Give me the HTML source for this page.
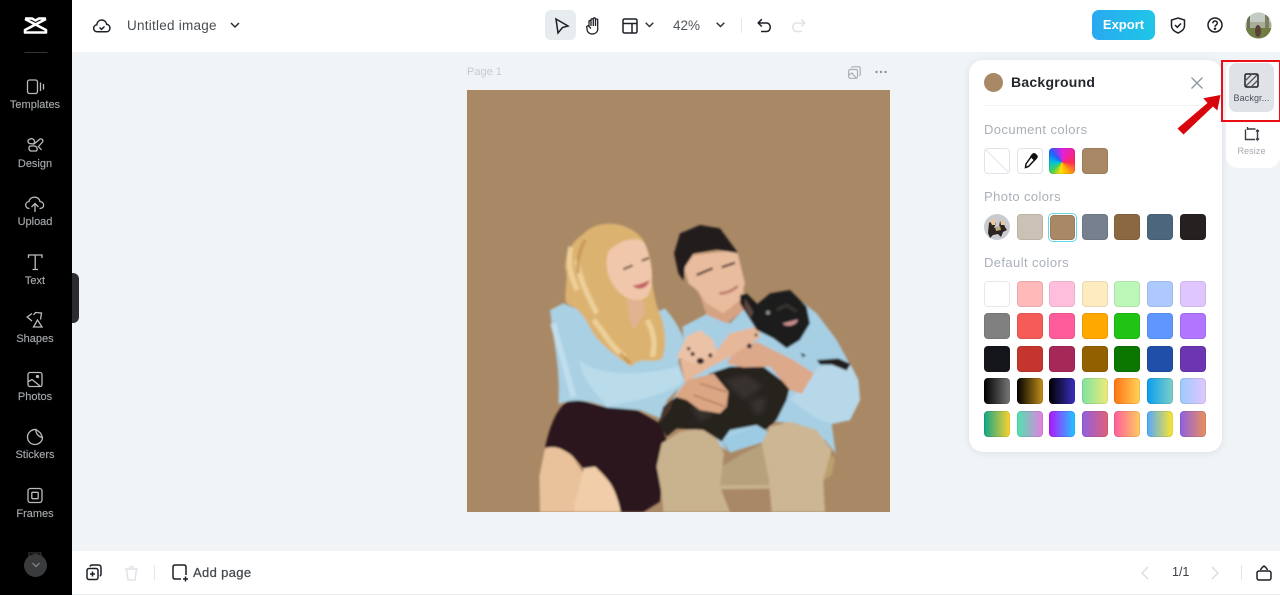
<!DOCTYPE html>
<html><head><meta charset="utf-8"><style>
html,body{margin:0;padding:0;width:1280px;height:595px;overflow:hidden;background:#f1f4f7;font-family:"Liberation Sans",sans-serif}
.a{position:absolute}
.t{position:absolute;white-space:nowrap;filter:blur(.3px)}
.nl{position:absolute;left:0;width:70px;text-align:center;color:#a4a8ab;font-size:11px;line-height:13px;filter:blur(.3px);-webkit-text-stroke:.15px #a4a8ab}
.s{position:absolute;width:26px;height:26px;border-radius:4px;box-sizing:border-box;box-shadow:inset 0 0 0 1px rgba(0,0,0,.08)}
.p{position:absolute;left:984px;font-size:13px;line-height:16px;color:#a9b0b9;letter-spacing:.4px;white-space:nowrap;filter:blur(.3px)}
svg{position:absolute;overflow:visible}
</style></head><body>
<div class="a" style="left:0;top:0;width:1280px;height:52px;background:#fff"></div>
<div class="a" style="left:72px;top:551px;width:1208px;height:43px;background:#fff"></div>
<div class="a" style="left:72px;top:594px;width:1208px;height:1px;background:#e8ebee"></div>

<!-- left bar -->
<div class="a" style="left:0;top:0;width:72px;height:595px;background:#000"></div>
<div class="a" style="left:72px;top:273px;width:7px;height:50px;background:#2b2c2e;border-radius:0 6px 6px 0"></div>
<svg style="left:0;top:0" width="72" height="595" fill="none" stroke="#b9bcbf" stroke-width="1.300">
<path d="M25 18.500H32L35.500 20.500 39 18.500H46M25 19L46 30V32.500H25V30L46 19" stroke="#fff" stroke-width="2.600" stroke-linejoin="round"/>
<path d="M24.500 52.500h23" stroke="#333" stroke-width="1"/>
<rect x="27.500" y="80" width="10" height="13.500" rx="2"/><path d="M40.500 82.500v8.500M43.500 84v5.500"/>
<path d="M29 139.500c3-2 6 0 5.500 3l-1 1.500-4-.5c-2-1-2-3 -.5-4zM34 144l6-5c2-.500 3.500 1 2.500 3l-4.500 5M30 146h5c2 1 3 3 1.500 5h-6c-2-1-2-4-.5-5zM38 146l3.500 4"/>
<path d="M29.500 208.500c-5 0-5-6.500-.5-7 .5-5.500 10-6 11 0 5 .5 5 7-.5 7M35 212v-8M31.500 207l3.500-3.500 3.500 3.500"/>
<path d="M28.500 258v-3h13.500v3M35.200 255v14.500M32.500 269.500h5.500"/>
<path d="M32 313.500l-4.800 3.500 4.800 4M33.500 315l2-2.500 6 .5-1 6.500M33.500 327l4-7 4.500 7z"/>
<rect x="28" y="372.500" width="14" height="14" rx="2"/><path d="M28.500 381.500l3.500-2 8 6.500"/><circle cx="37.500" cy="376.500" r="1" fill="#b9bcbf"/>
<path d="M36 429.500c-4-.5-8.500 3-8.500 7.500 0 4.500 3.500 7.500 7.500 7.500 3.500 0 7.500-3 7.500-7l-2-4.500zM36 429.500c-.5 3 1.500 7 6.500 8"/>
<rect x="28" y="488.500" width="14" height="14" rx="2.500"/><rect x="31.800" y="492.300" width="6.400" height="6.400" rx="1"/>
<path d="M29 563v-10h12v10M35 553v10" stroke="#333"/>
</svg>
<div class="a" style="left:24px;top:554px;width:23px;height:23px;border-radius:50%;background:#3a3b3d"></div>
<svg style="left:32px;top:562px" width="8" height="6" fill="none" stroke="#8a8c8e" stroke-width="1.200"><path d="M.5 1l3.500 3.500L7.500 1"/></svg>
<div class="nl" style="top:99px">Templates</div>
<div class="nl" style="top:158px">Design</div>
<div class="nl" style="top:216px">Upload</div>
<div class="nl" style="top:275px">Text</div>
<div class="nl" style="top:333px">Shapes</div>
<div class="nl" style="top:391px">Photos</div>
<div class="nl" style="top:449px">Stickers</div>
<div class="nl" style="top:508px">Frames</div>

<!-- top bar -->
<svg style="left:93px;top:17px" width="18" height="17" fill="none" stroke="#1c2026" stroke-width="1.500"><path d="M4.500 14.800c-5 0-5-6.300-.8-7C4.500 1.500 12.500 1.500 13.700 7.300c4.500.8 4.300 7.500-.5 7.500zM6.500 10.500l2 1.800 3-2.800"/></svg>
<div class="t" style="left:127px;top:18px;font-size:13.500px;line-height:15px;color:#484d54;letter-spacing:.25px">Untitled image</div>
<svg style="left:230px;top:22px" width="10" height="7" fill="none" stroke="#2a2e33" stroke-width="1.500"><path d="M1 1l4 4 4-4"/></svg>

<div class="a" style="left:545px;top:10px;width:31px;height:30px;background:#e7ecef;border-radius:6px"></div>
<svg style="left:555px;top:18px" width="14" height="16" fill="none" stroke="#1c2026" stroke-width="1.500"><path d="M1 1l12 7-5.500 1.500L3 15z"/></svg>
<svg style="left:586px;top:17px" width="17" height="18" fill="none" stroke="#1c2026" stroke-width="1.300"><path d="M3 9.500V4.500c0-1.300 2-1.300 2 0V2.800c0-1.400 2.200-1.400 2.200 0V2c0-1.400 2.300-1.400 2.300 0v1c0-1.300 2.200-1.300 2.200 0v9c0 6-8.500 6.500-10.300 2L.8 10.500c-.5-1.500 1.500-2.300 2.200-1L5 11.500M5 4.500V9M7.300 2.500V9M9.500 2.500V9"/></svg>
<svg style="left:622px;top:18px" width="16" height="16" fill="none" stroke="#1c2026" stroke-width="1.500"><rect x="1" y="1" width="14" height="14" rx="1.500"/><path d="M1 5.500h14M10 5.500V15"/></svg>
<svg style="left:645px;top:22px" width="9" height="6" fill="none" stroke="#2a2e33" stroke-width="1.400"><path d="M.7.700l3.800 3.800L8.300.7"/></svg>
<div class="t" style="left:673px;top:18px;font-size:13.500px;line-height:16px;color:#50555c">42%</div>
<svg style="left:716px;top:22px" width="9" height="6" fill="none" stroke="#2a2e33" stroke-width="1.400"><path d="M.7.700l3.800 3.800L8.300.7"/></svg>
<div class="a" style="left:741px;top:18px;width:1px;height:15px;background:#e3e7ea"></div>
<svg style="left:757px;top:18px" width="15" height="15" fill="none" stroke="#1c2026" stroke-width="1.500"><path d="M1.500 5h8c5 0 5 8.500 0 8.500H4M4.800 1.200L1.200 5l3.600 3.500"/></svg>
<svg style="left:791px;top:18px" width="15" height="15" fill="none" stroke="#dde3e7" stroke-width="1.500"><path d="M13.500 5h-8c-5 0-5 8.500 0 8.500H11M10.200 1.200L13.800 5l-3.600 3.500"/></svg>

<div class="a" style="left:1092px;top:10px;width:63px;height:30px;border-radius:7px;background:linear-gradient(90deg,#29a9f0,#1fc6e8)"></div>
<div class="t" style="left:1092px;top:17px;width:63px;text-align:center;font-size:13px;line-height:16px;font-weight:bold;color:#fff">Export</div>
<svg style="left:1170px;top:17px" width="16" height="17" fill="none" stroke="#1c2026" stroke-width="1.500"><path d="M8 1l6.500 2v6c0 3.500-3 5.500-6.500 7-3.500-1.500-6.500-3.500-6.500-7V3zM5 8l2.300 2.300L11 6.500"/></svg>
<svg style="left:1207px;top:17px" width="16" height="16" fill="none" stroke="#1c2026" stroke-width="1.500"><circle cx="8" cy="8" r="7"/><path d="M5.800 6.200c0-3 4.600-2.800 4.500 0 0 1.800-2.300 1.800-2.300 3.500"/><circle cx="8" cy="11.800" r=".5" fill="#1c2026"/></svg>
<svg style="left:1245px;top:12px" width="27" height="27"><defs><clipPath id="av"><circle cx="13.500" cy="13.500" r="13"/></clipPath></defs><g clip-path="url(#av)"><rect width="27" height="27" fill="#a8ad98"/><rect width="27" height="10" fill="#c3ccc4"/><rect y="16" width="27" height="11" fill="#6f7d44"/><rect x="2" y="4" width="3" height="12" fill="#6d7256"/><rect x="20" y="3" width="4" height="13" fill="#7b8062"/><ellipse cx="13" cy="19" rx="3" ry="6" fill="#5a4036"/></g></svg>

<!-- canvas -->
<div class="t" style="left:467px;top:66px;font-size:11px;line-height:13px;color:#c5cad0">Page 1</div>
<svg style="left:848px;top:66px" width="13" height="13" fill="none" stroke="#a9aeb4" stroke-width="1.200"><rect x=".7" y="3.500" width="8.800" height="8.800" rx="1.500"/><path d="M3.500 1.800c0-.7.500-1 1-1h6.500c.7 0 1.200.5 1.200 1.200v6.500c0 .6-.4 1-1 1M1 9l3-2 4 5"/></svg>
<svg style="left:875px;top:70px" width="12" height="4" fill="#8e9399"><circle cx="1.500" cy="2" r="1.200"/><circle cx="6" cy="2" r="1.200"/><circle cx="10.500" cy="2" r="1.200"/></svg>

<div class="a" style="left:467px;top:90px;width:423px;height:422px;background:#a98865"></div>
<svg style="left:530px;top:210px" width="340" height="302" viewBox="0 0 1020 906"><defs><filter id="b" x="-5%" y="-5%" width="110%" height="110%"><feGaussianBlur stdDeviation="3.500"/></filter><filter id="b2" x="-20%" y="-20%" width="140%" height="140%"><feGaussianBlur stdDeviation="8"/></filter><clipPath id="c"><rect width="1020" height="906"/></clipPath></defs>
<g clip-path="url(#c)"><g filter="url(#b)">
<!-- woman's legs -->
<path d="M45 715L28 800 30 906H135L160 790 125 735 75 708z" fill="#e9c29b"/>
<path d="M162 772L135 880 135 906H274L250 830 195 770z" fill="#f1cdaa"/>
<!-- skirt -->
<path d="M45 715C58 650 85 575 130 568 170 572 200 590 230 590L320 600 390 640 410 690 395 830 390 875 340 906H272C265 860 240 800 195 770L160 775C130 735 90 700 45 715z" fill="#2c151c"/>
<!-- woman's shirt -->
<path d="M60 300L100 280 150 300 300 340 405 295C435 330 460 370 462 400L445 455 465 515 412 570 390 625 330 600 230 592C180 570 130 565 85 582 92 480 70 390 60 300z" fill="#a9d0e3"/>
<path d="M150 450C190 490 300 505 445 470L462 515C400 560 300 575 230 590 190 540 150 500 150 450z" fill="#b9dbea"/>
<path d="M70 340C90 420 110 480 130 560" stroke="#c0deec" stroke-width="18" fill="none"/>
<!-- man's shirt -->
<path d="M458 350L530 312 600 340 640 300 815 275 860 310 920 390 985 510 990 570 960 630 905 642 917 730 885 690 800 640 730 635 700 660 625 680 575 690 592 725 480 640 400 620 465 500z" fill="#a6cfe4"/>
<path d="M575 690L700 640 720 690 600 728z" fill="#9ecbe4"/>
<!-- man's pants -->
<path d="M570 830L575 770 640 730 700 700 718 830z" fill="#b7a17c"/>
<path d="M380 770L395 700 450 665 520 655 560 685 582 730 570 830 600 906H400L395 850z" fill="#c9b28e"/>
<path d="M875 715L915 745 905 795 878 815z" fill="#b9a06c"/>
<path d="M695 700L720 650 780 635 860 660 905 720 880 810 885 906H725L715 800z" fill="#ccb693"/>
<path d="M570 826L718 826 718 836 570 838z" fill="#c7b48f"/>
<!-- dog body -->
<path d="M385 640L400 590 440 560 540 490 600 470 700 470 780 530 770 570 740 630 705 660 680 645 600 660 575 695 520 660 440 655 410 680z" fill="#26211f"/>
<path d="M580 510l70-15 50 35-60 40zM480 590l40-15 30 40-40 20zM660 570l50-10-10 50-30 0z" fill="#39332f" filter="url(#b2)"/>
<path d="M388 640L402 592 430 570 420 600z" fill="#4c342a"/>
<!-- man's sleeve -->
<path d="M780 570L850 490 865 470 960 460 985 510 990 570 960 630 905 642 860 625z" fill="#b7d8e9"/>
<!-- black patch -->
<path d="M860 450L925 445 962 462 950 482 905 464 870 464z" fill="#211e1d"/>
<path d="M812 428l16 8-10 6z" fill="#211e1d"/>
<!-- man's arm and hand -->
<path d="M590 460L610 430 680 395 720 415 790 450 852 490 815 552 780 540 720 470 640 472z" fill="#dca98a"/>
<!-- woman's lower hand -->
<path d="M435 560L470 510 550 490 595 545 590 590 570 610 510 600 470 570z" fill="#dba683"/>
<path d="M510 520l80 26M490 555l95 35" stroke="#a9765a" stroke-width="4" fill="none"/>
<!-- woman's upper arm/hand -->
<path d="M450 450L560 420 600 370 680 350 692 380 665 400 600 440 540 472 465 516z" fill="#e6b798"/>
<path d="M440 442L470 380 510 360 550 390 560 432 500 462z" fill="#ebc2a6"/>
<g fill="#2a1a20"><ellipse cx="511" cy="453" rx="11" ry="9"/><circle cx="541" cy="436" r="6"/><circle cx="658" cy="408" r="7"/><circle cx="476" cy="416" r="5"/><circle cx="488" cy="432" r="6"/><circle cx="678" cy="375" r="4"/></g>
<!-- man's neck -->
<path d="M505 245L640 235 655 290 590 340 530 315z" fill="#d6a284"/>
<!-- man's head -->
<path d="M462 175L490 135 570 125 622 125 645 220 630 270 580 310 530 280 500 240 475 220z" fill="#e9bc9e"/>
<path d="M432 130L450 70 510 45 570 55 625 130 560 118 490 130 465 170 460 212 445 190z" fill="#211a1b"/>
<path d="M500 195l48-20M575 172l40-14" stroke="#4d3a34" stroke-width="7" fill="none"/>
<path d="M568 250c20 0 40-8 55-22" stroke="#b97a68" stroke-width="8" fill="none"/>
<!-- woman's hair -->
<path d="M160 72C195 30 290 25 340 90 365 190 370 260 385 300 410 350 410 420 395 448 355 460 325 440 305 470 270 450 235 420 205 390 170 350 170 310 120 285 90 280 120 215 105 170 110 120 130 92 160 72z" fill="#dcb26f"/>
<path d="M140 150c10 60 30 100 60 160M190 330c30 30 50 80 95 110M352 330c20 40 25 70 15 110M122 110c-10 50 0 90 20 130" stroke="#f0d6a2" stroke-width="16" fill="none" opacity=".8"/>
<path d="M165 90c-15 30-25 60-20 100M270 430l30 30" stroke="#c28f4c" stroke-width="10" fill="none" opacity=".7"/>
<!-- woman's face and neck -->
<path d="M290 270L340 265 345 310 310 360 300 330z" fill="#e3b291"/>
<path d="M235 125C260 95 320 72 345 100 372 165 372 230 352 260 320 280 280 270 250 225 228 195 225 155 235 125z" fill="#f0c7aa"/>
<path d="M280 178l28-12M335 152l22-8" stroke="#5e4338" stroke-width="6" fill="none"/>
<path d="M308 226c15 0 35-8 50-16-2 25-35 35-50 16z" fill="#c45f63"/>
<!-- dog head -->
<path d="M630 255L650 250 682 282 720 250 780 240 830 290 840 340 810 390 770 415 730 385 680 360 655 320 630 280z" fill="#1d1a1b"/>
<path d="M645 265l25 40-8 20-18-35z" fill="#5f443c"/>
<path d="M758 340l45-12c2 15-32 28-45 12z" fill="#c88e8e"/>
<circle cx="714" cy="308" r="6" fill="#8f8c8b"/>
<path d="M740 300l30-15 30 20" stroke="#35312f" stroke-width="10" fill="none"/>
</g></g></svg>

<!-- panel -->
<div class="a" style="left:969px;top:60px;width:253px;height:392px;background:#fff;border-radius:14px;box-shadow:0 1px 8px rgba(30,50,70,.1)"></div>
<div class="a" style="left:984px;top:73px;width:19px;height:19px;border-radius:50%;background:#a98865"></div>
<div class="t" style="left:1011px;top:74px;font-size:14px;line-height:17px;font-weight:bold;color:#24282e;letter-spacing:.25px">Background</div>
<svg style="left:1191px;top:77px" width="12" height="12" fill="none" stroke="#8e959c" stroke-width="1.300"><path d="M.5.500l11 11M11.500.500l-11 11"/></svg>
<div class="a" style="left:984px;top:105px;width:223px;height:1px;background:#f1f3f5"></div>
<div class="p" style="top:122px">Document colors</div>
<div class="p" style="top:189px">Photo colors</div>
<div class="p" style="top:255px">Default colors</div>

<div class="s" style="left:984px;top:148px;background:#fff;box-shadow:inset 0 0 0 1px #dfe4ea"></div>
<svg style="left:985px;top:149px" width="24" height="24"><path d="M0 0L24 24" stroke="#e3e7eb" stroke-width="1"/></svg>
<div class="s" style="left:1017px;top:148px;background:#fff;box-shadow:inset 0 0 0 1px #dfe4ea"></div>
<svg style="left:1023px;top:153px" width="15" height="16" fill="none" stroke="#111" stroke-width="1.500"><path d="M9 2.500l3.500 3.500-7 7.500-3 1 .5-3.500z"/><path d="M9.500 1.500c1-1 2-1 3 0l1 1c1 1 .5 2-.5 3l-1.500 1.500-3.500-3.500z" fill="#111"/></svg>
<div class="s" style="left:1049px;top:148px;background:conic-gradient(from 0deg at 50% 55%,#e01fe0,#ff2a5a 90deg,#ffb000 150deg,#ffe000 190deg,#40d060 230deg,#00c0e0 270deg,#2060ff 315deg,#e01fe0)"></div>
<div class="s" style="left:1082px;top:148px;background:#a98865"></div>

<div class="a" style="left:984px;top:214px;width:26px;height:26px;border-radius:50%;background:#c8ccd0;overflow:hidden">
<svg width="26" height="26"><path d="M5 9l4-3 3 3-2 5 5-1 1-6 3 0 2 6 2 3-4 2-2 5-3-3-5 1-3 3-2-5z" fill="#2c241f"/><path d="M6 7l3-3 3 3-1 4-3 0zM16 6l4 0 1 5-4 0z" fill="#e6c8a8"/><path d="M11 13l5-1 1 4-5 1z" fill="#b9a884"/></svg></div>
<div class="s" style="left:1017px;top:214px;background:#cbc2b5"></div>
<div class="a" style="left:1047.500px;top:212.500px;width:29px;height:29px;border-radius:5px;border:1.500px solid #5fd8e8;box-sizing:border-box"></div>
<div class="s" style="left:1049.500px;top:214.500px;width:25px;height:25px;background:#a98865"></div>
<div class="s" style="left:1082px;top:214px;background:#77808f"></div>
<div class="s" style="left:1114px;top:214px;background:#8b6842"></div>
<div class="s" style="left:1147px;top:214px;background:#4b667d"></div>
<div class="s" style="left:1180px;top:214px;background:#252121"></div>

<div class="s" style="left:984px;top:281px;background:#fff;box-shadow:inset 0 0 0 1px #e6e9ec"></div>
<div class="s" style="left:1017px;top:281px;background:#ffb9b9"></div>
<div class="s" style="left:1049px;top:281px;background:#ffbfdc"></div>
<div class="s" style="left:1082px;top:281px;background:#ffebc0"></div>
<div class="s" style="left:1114px;top:281px;background:#bdf7b7"></div>
<div class="s" style="left:1147px;top:281px;background:#adc9ff"></div>
<div class="s" style="left:1180px;top:281px;background:#dfc6ff"></div>

<div class="s" style="left:984px;top:313px;background:#808080"></div>
<div class="s" style="left:1017px;top:313px;background:#f55c57"></div>
<div class="s" style="left:1049px;top:313px;background:#ff5c9c"></div>
<div class="s" style="left:1082px;top:313px;background:#ffa800"></div>
<div class="s" style="left:1114px;top:313px;background:#1fc414"></div>
<div class="s" style="left:1147px;top:313px;background:#5f96ff"></div>
<div class="s" style="left:1180px;top:313px;background:#b175ff"></div>

<div class="s" style="left:984px;top:346px;background:#14161b"></div>
<div class="s" style="left:1017px;top:346px;background:#c4352d"></div>
<div class="s" style="left:1049px;top:346px;background:#a62858"></div>
<div class="s" style="left:1082px;top:346px;background:#936000"></div>
<div class="s" style="left:1114px;top:346px;background:#0b7700"></div>
<div class="s" style="left:1147px;top:346px;background:#1f4fa8"></div>
<div class="s" style="left:1180px;top:346px;background:#6c35b2"></div>

<div class="s" style="left:984px;top:378px;background:linear-gradient(90deg,#000,#777)"></div>
<div class="s" style="left:1017px;top:378px;background:linear-gradient(90deg,#000,#c28f1c)"></div>
<div class="s" style="left:1049px;top:378px;background:linear-gradient(90deg,#000,#3a2fbf)"></div>
<div class="s" style="left:1082px;top:378px;background:linear-gradient(90deg,#7fe3a0,#eeea78)"></div>
<div class="s" style="left:1114px;top:378px;background:linear-gradient(90deg,#ff7214,#ffd45a)"></div>
<div class="s" style="left:1147px;top:378px;background:linear-gradient(90deg,#0a9df0,#7dd0c4)"></div>
<div class="s" style="left:1180px;top:378px;background:linear-gradient(90deg,#9ccbff,#e2c6ff)"></div>

<div class="s" style="left:984px;top:411px;background:linear-gradient(90deg,#0fa58a,#fdd22c)"></div>
<div class="s" style="left:1017px;top:411px;background:linear-gradient(90deg,#4fe3b0,#e47fe0)"></div>
<div class="s" style="left:1049px;top:411px;background:linear-gradient(90deg,#b214ff,#1cc8ff)"></div>
<div class="s" style="left:1082px;top:411px;background:linear-gradient(90deg,#9060e0,#e0607a)"></div>
<div class="s" style="left:1114px;top:411px;background:linear-gradient(90deg,#ff5c9c,#ffcc60)"></div>
<div class="s" style="left:1147px;top:411px;background:linear-gradient(90deg,#52a8ff,#ffe62c)"></div>
<div class="s" style="left:1180px;top:411px;background:linear-gradient(90deg,#8c60e0,#ec8f5c)"></div>

<!-- right tabs -->
<div class="a" style="left:1226px;top:60px;width:54px;height:108px;background:#fff;border-radius:12px 0 12px 12px"></div>
<div class="a" style="left:1229px;top:63px;width:45px;height:49px;background:#dfe3e7;border-radius:7px"></div>
<svg style="left:1244px;top:73px" width="15" height="15" fill="none" stroke="#1c2026" stroke-width="1.500"><rect x="1" y="1" width="13" height="13" rx="1.500"/><path d="M1 8l7-7M2 13l11-11M7 14l7-7" stroke="#555" stroke-width="1.300"/></svg>
<div class="t" style="left:1229px;top:93px;width:45px;text-align:center;font-size:9px;line-height:11px;color:#4b5056;letter-spacing:.1px">Backgr...</div>
<svg style="left:1244px;top:126px" width="15" height="16" fill="none" stroke="#3a3e44" stroke-width="1.400"><path d="M3 3h8.500M1.500 3.500v10h9.500M3.500 1v3M13.500 4v10M12 5.500l1.500-1.500L15 5.500M12 12.500l1.500 1.500 1.500-1.500"/></svg>
<div class="t" style="left:1229px;top:146px;width:45px;text-align:center;font-size:9px;line-height:11px;color:#a4aab0;letter-spacing:.1px">Resize</div>

<!-- annotation -->
<div class="a" style="left:1221px;top:60px;width:60px;height:62px;border:2.500px solid #ea0f14;box-sizing:border-box"></div>
<svg style="left:0;top:0" width="1280" height="595"><polygon points="1177.500,128.500 1207.500,103 1203.300,98.300 1220.500,95 1217.300,110.500 1213,106.500 1183.500,134.500" fill="#d8050c"/></svg>

<!-- bottom bar -->
<svg style="left:86px;top:564px" width="16" height="17" fill="none" stroke="#1c2026" stroke-width="1.500"><rect x="1" y="4.500" width="11" height="11" rx="2"/><path d="M4 2.500c.3-1 1-1.500 2-1.500h6.500c1.500 0 2.500 1 2.500 2.500V10c0 1-.5 1.700-1.200 2M6.500 7.500v5M4 10h5"/></svg>
<svg style="left:124px;top:565px" width="15" height="16" fill="none" stroke="#dfe4e9" stroke-width="1.500"><path d="M1 4h13M5.500 4c0-3.500 4-3.500 4 0M2.500 4l1.500 11h7l1.500-11"/></svg>
<div class="a" style="left:154px;top:565px;width:1px;height:15px;background:#e3e7ea"></div>
<svg style="left:172px;top:564px" width="17" height="18" fill="none" stroke="#1c2026" stroke-width="1.500"><path d="M9 15H3c-1.200 0-2-.800-2-2V3c0-1.200.800-2 2-2h9c1.200 0 2 .800 2 2v8M13.500 12.500v5M11 15h5"/></svg>
<div class="t" style="left:193px;top:565px;font-size:13px;line-height:16px;color:#44494f;letter-spacing:.35px;-webkit-text-stroke:.25px #44494f">Add page</div>
<svg style="left:1141px;top:566px" width="8" height="14" fill="none" stroke="#d5dade" stroke-width="1.300"><path d="M7 1L1 7l6 6"/></svg>
<div class="t" style="left:1172px;top:565px;font-size:12.500px;line-height:15px;color:#3c4046">1/1</div>
<svg style="left:1211px;top:566px" width="8" height="14" fill="none" stroke="#d5dade" stroke-width="1.300"><path d="M1 1l6 6-6 6"/></svg>
<div class="a" style="left:1241px;top:565px;width:1px;height:15px;background:#e3e7ea"></div>
<svg style="left:1256px;top:564px" width="16" height="17" fill="none" stroke="#1c2026" stroke-width="1.500"><rect x="1" y="7" width="14" height="9" rx="2"/><path d="M4.500 6c.5-1.500 1.500-2.500 3.500-4 2 1.500 3 2.500 3.500 4"/></svg>
</body></html>
